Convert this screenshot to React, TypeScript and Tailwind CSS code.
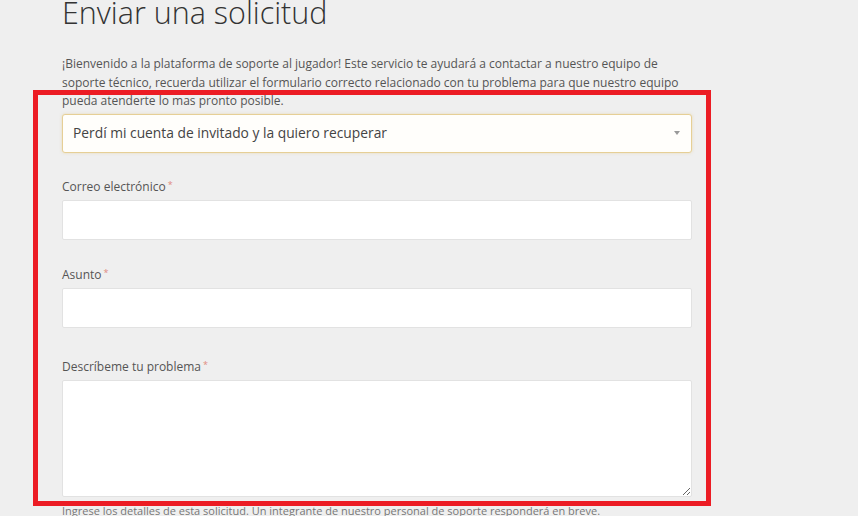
import React from 'react';

const font = { fontFamily: '"Open Sans", "Noto Sans", sans-serif' };

function Label({ text }: { text: string }) {
  return (
    <label className="flex items-start text-[12px] leading-[16px] text-[#555]">
      {text}
      <span className="ml-[2px] mt-[1px] text-[9px] leading-[9px] text-[#e08a80]">*</span>
    </label>
  );
}

export default function App() {
  return (
    <div className="relative h-[516px] w-[858px] overflow-hidden bg-[#efefef]" style={font}>
      <div className="ml-[62px] w-[630px]">
        {/* título */}
        <h1 className="-mt-[7px] text-[30.5px] font-light leading-[38px] text-[#333]">Enviar una solicitud</h1>

        {/* introducción */}
        <p className="mt-[24px] text-[12px] leading-[18.5px] text-[#555]">
          ¡Bienvenido a la plataforma de soporte al jugador! Este servicio te ayudará a contactar a nuestro equipo de
          <br />
          soporte técnico, recuerda utilizar el formulario correcto relacionado con tu problema para que nuestro equipo
          <br />
          pueda atenderte lo mas pronto posible.
        </p>

        {/* selector de formulario */}
        <div className="mt-[3px] flex h-[39px] items-center justify-between rounded-[3px] border border-[#e6cf96] bg-[#fffefb] pl-[10px] pr-[11px] shadow-[0_0_3px_rgba(230,200,130,0.5)]">
          <span className="text-[13.8px] text-[#444]">Perdí mi cuenta de invitado y la quiero recuperar</span>
          <span className="h-0 w-0 border-x-[3px] border-t-[4px] border-x-transparent border-t-[#999]" />
        </div>

        <div className="mt-[26px]">
          <Label text="Correo electrónico" />
          <input className="mt-[5px] block h-[40px] w-full rounded-[2px] border border-[#e2e2e2] bg-white outline-none" />
        </div>

        <div className="mt-[27px]">
          <Label text="Asunto" />
          <input className="mt-[5px] block h-[40px] w-full rounded-[2px] border border-[#e2e2e2] bg-white outline-none" />
        </div>

        <div className="mt-[31px]">
          <Label text="Descríbeme tu problema" />
          <textarea className="mt-[5px] block h-[117px] w-full rounded-[2px] border border-[#e2e2e2] bg-white outline-none" />
          <p className="mt-[7px] text-[11px] leading-[14px] text-[#777]">
            Ingrese los detalles de esta solicitud. Un integrante de nuestro personal de soporte responderá en breve.
          </p>
        </div>
      </div>

      {/* recuadro rojo de anotación */}
      <div className="pointer-events-none absolute left-[33px] top-[90px] h-[416px] w-[678px] border-[5px] border-[#ec1c24]" />
    </div>
  );
}
